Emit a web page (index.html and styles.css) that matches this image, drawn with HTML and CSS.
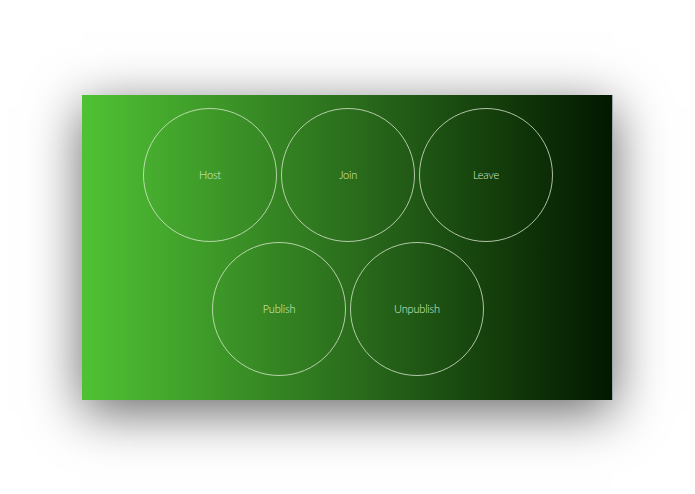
FILE: index.html
```html
<!DOCTYPE html>
<html>
<head>
<meta charset="utf-8">
<link rel="stylesheet" href="styles.css">
</head>
<body>
<div class="panel">
  <div class="buttons">
    <div class="circle">Host</div>
    <div class="circle">Join</div>
    <div class="circle">Leave</div>
    <div class="circle">Publish</div>
    <div class="circle">Unpublish</div>
  </div>
</div>
</body>
</html>
```
FILE: styles.css
```css
html, body {
  margin: 0;
  padding: 0;
  background: #ffffff;
}
body {
  width: 695px;
  height: 494px;
  display: flex;
  align-items: center;
  justify-content: center;
  font-family: Lato, "Open Sans", sans-serif;
}
.panel {
  width: 531px;
  height: 305px;
  box-sizing: border-box;
  background: linear-gradient(to right, #4fc234 0%, #3a9026 30%, #27661a 55%, #123a0a 80%, #021800 100%);
  box-shadow: 0 12px 50px rgba(0, 0, 0, 0.6);
  border-right: 1px solid #9aa8a8;
  padding-top: 13px;
  padding-left: 2px;
}
.buttons {
  width: 410px;
  margin: 0 auto;
  display: flex;
  flex-wrap: wrap;
  justify-content: center;
  column-gap: 4px;
  row-gap: 0;
}
.circle {
  width: 132px;
  height: 132px;
  border: 1px solid rgba(225, 235, 215, 0.75);
  border-radius: 50%;
  display: flex;
  align-items: center;
  justify-content: center;
  color: #d9f0c9;
  font-size: 11px;
  font-weight: 300;
  letter-spacing: -0.2px;
}
```
